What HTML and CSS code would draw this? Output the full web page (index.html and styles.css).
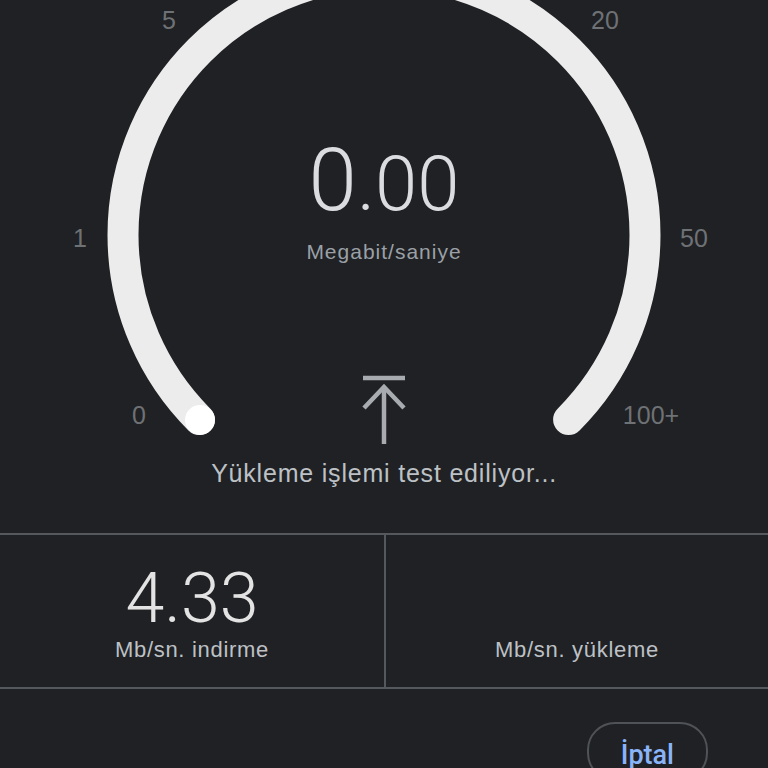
FILE: index.html
```html
<!DOCTYPE html>
<html lang="tr">
  <head>
    <meta charset="UTF-8" />
    <meta name="viewport" content="width=device-width, initial-scale=1.0" />
    <title>Hız testi</title>
    <link rel="stylesheet" href="styles.css">
  </head>
  <body>
    <section class="gauge">
      <svg class="dial" width="768" height="533" viewBox="0 0 768 533">
        <path class="dial-arc" d="M 199.4 419.6 A 261 261 0 1 1 568.6 419.6" />
        <circle class="dial-dot" cx="200" cy="420" r="15" />
        <text class="tick" x="169" y="29">5</text>
        <text class="tick" x="605" y="29">20</text>
        <text class="tick" x="80" y="247">1</text>
        <text class="tick" x="694" y="247">50</text>
        <text class="tick" x="139" y="424">0</text>
        <text class="tick" x="651" y="424">100+</text>
      </svg>

      <div class="value">0<span class="dec">.00</span></div>
      <div class="unit">Megabit/saniye</div>

      <svg class="upload-icon" width="50" height="72" viewBox="0 0 50 72">
        <path d="M 4 4 H 46" />
        <path d="M 5 34 L 25 13 L 45 34" />
        <path d="M 25 14 V 70" />
      </svg>

      <div class="status">Yükleme işlemi test ediliyor...</div>
    </section>

    <section class="stats">
      <div class="stat">
        <div class="stat-value">4.33</div>
        <div class="stat-label">Mb/sn. indirme</div>
      </div>
      <div class="stat">
        <div class="stat-value"></div>
        <div class="stat-label">Mb/sn. yükleme</div>
      </div>
    </section>

    <footer class="actions">
      <button class="cancel-button">İptal</button>
    </footer>
  </body>
</html>
```

FILE: styles.css
```css
body {
  font-family: "Liberation Sans", Arial, sans-serif;
  margin: 0;
  padding: 0;
  height: 768px;
  overflow: hidden;
  background-color: #202124;
  color: #e8eaed;
}

.gauge {
  position: relative;
  height: 533px;
  display: flex;
  flex-direction: column;
  align-items: center;
  padding-top: 137px;
  box-sizing: border-box;
}

.dial {
  position: absolute;
  top: 0;
  left: 0;
}

.dial-arc {
  fill: none;
  stroke: #ececec;
  stroke-width: 31;
  stroke-linecap: round;
}

.dial-dot {
  fill: #ffffff;
}

.tick {
  font-family: "Liberation Sans", Arial, sans-serif;
  font-size: 25px;
  fill: #6e7175;
  text-anchor: middle;
}

.value,
.unit,
.upload-icon,
.status {
  position: relative;
}

.value {
  font-family: Roboto, sans-serif;
  font-weight: 300;
  font-size: 87px;
  line-height: 87px;
  color: #dadce0;
}

.value .dec {
  font-size: 76px;
}

.unit {
  margin-top: 13px;
  font-size: 21px;
  line-height: 21px;
  letter-spacing: 1px;
  color: #9aa0a6;
}

.upload-icon {
  margin-top: 112px;
  fill: none;
  stroke: #a8abaf;
  stroke-width: 4.5;
}

.status {
  margin-top: 15px;
  font-size: 25px;
  line-height: 25px;
  letter-spacing: 0.8px;
  color: #bdc1c6;
}

.stats {
  display: grid;
  grid-template-columns: 1fr 1fr;
  border-top: 2px solid #55585c;
  border-bottom: 2px solid #55585c;
}

.stat {
  display: flex;
  flex-direction: column;
  align-items: center;
  padding-top: 22px;
  height: 152px;
  box-sizing: border-box;
}

.stat + .stat {
  border-left: 2px solid #55585c;
}

.stat-value {
  font-family: Roboto, sans-serif;
  font-weight: 300;
  font-size: 70px;
  line-height: 82px;
  height: 82px;
  color: #e3e3e3;
}

.stat-label {
  margin-top: 0;
  font-size: 22px;
  line-height: 22px;
  letter-spacing: 0.7px;
  color: #bdc1c6;
}

.actions {
  display: flex;
  justify-content: flex-end;
  padding: 33px 60px 0 0;
}

.cancel-button {
  font-family: Roboto, sans-serif;
  font-weight: 500;
  font-size: 27px;
  line-height: 27px;
  color: #8ab4f8;
  background: none;
  border: 2px solid #4f5256;
  border-radius: 28px;
  padding: 18px 32px 10px;
  cursor: pointer;
}
```
